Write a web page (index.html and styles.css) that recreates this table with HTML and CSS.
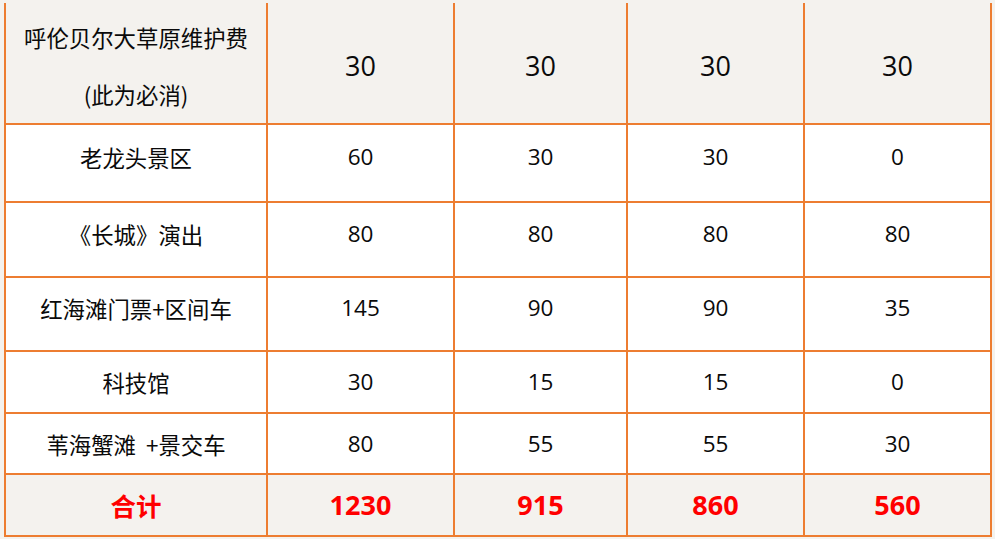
FILE: index.html
```html
<!DOCTYPE html>
<html lang="zh-CN">
<head>
<meta charset="utf-8">
<title>费用表</title>
<link rel="stylesheet" href="styles.css">
</head>
<body>
<table class="fees">
  <colgroup>
    <col class="c-name">
    <col class="c-a">
    <col class="c-b">
    <col class="c-c">
    <col class="c-d">
  </colgroup>
  <tbody>
    <tr class="row-head paper">
      <td class="name two-line"><span class="l1">呼伦贝尔大草原维护费</span><span class="l2">(此为必消)</span></td>
      <td class="big">30</td>
      <td class="big">30</td>
      <td class="big">30</td>
      <td class="big">30</td>
    </tr>
    <tr class="row-a lift">
      <td class="name">老龙头景区</td>
      <td>60</td><td>30</td><td>30</td><td>0</td>
    </tr>
    <tr class="row-b lift">
      <td class="name">《长城》演出</td>
      <td>80</td><td>80</td><td>80</td><td>80</td>
    </tr>
    <tr class="row-c lift">
      <td class="name">红海滩门票+区间车</td>
      <td>145</td><td>90</td><td>90</td><td>35</td>
    </tr>
    <tr class="row-d">
      <td class="name">科技馆</td>
      <td>30</td><td>15</td><td>15</td><td>0</td>
    </tr>
    <tr class="row-e">
      <td class="name">苇海蟹滩&nbsp;&nbsp;+景交车</td>
      <td>80</td><td>55</td><td>55</td><td>30</td>
    </tr>
    <tr class="row-total paper total">
      <td class="name">合计</td>
      <td>1230</td><td>915</td><td>860</td><td>560</td>
    </tr>
  </tbody>
</table>
</body>
</html>
```
FILE: styles.css
```css
html, body {
  margin: 0;
  padding: 0;
}
body {
  background: #f4f2ee;
  font-family: "Open Sans", "Noto Sans CJK SC", sans-serif;
  color: #0a0a0a;
}
.fees {
  border-collapse: collapse;
  table-layout: fixed;
  width: 986px;
  margin: 3px 0 0 4px;
}
.c-name { width: 262px; }
.c-a { width: 187px; }
.c-b { width: 173px; }
.c-c { width: 177px; }
.c-d { width: 187px; }

.fees td {
  border: 2px solid #ed7d31;
  text-align: center;
  vertical-align: middle;
  padding: 0;
  font-size: 22.5px;
  line-height: 30px;
  background: #ffffff;
}
.fees .name {
  font-family: "Noto Sans CJK SC", sans-serif;
  font-size: 22.4px;
}
.fees tr:first-child td {
  border-top: none;
}
.fees .paper td {
  background: #f4f2ee;
}
.row-head td {
  height: 115px;
  padding-top: 5px;
}
.row-a td { height: 64px; }
.row-b td { height: 61px; }
.row-c td { height: 60px; }
.row-d td { height: 60px; }
.row-e td { height: 59px; }
.row-total td { height: 60px; }

.lift td {
  padding-bottom: 12px;
}
.two-line {
  line-height: 57px !important;
}
.two-line span {
  display: block;
}
.big {
  font-size: 27px !important;
}
.total td {
  color: #ff0000;
  font-weight: 700;
  font-size: 27px;
}
.total .name {
  font-size: 25.5px;
  font-weight: 700;
}
```
